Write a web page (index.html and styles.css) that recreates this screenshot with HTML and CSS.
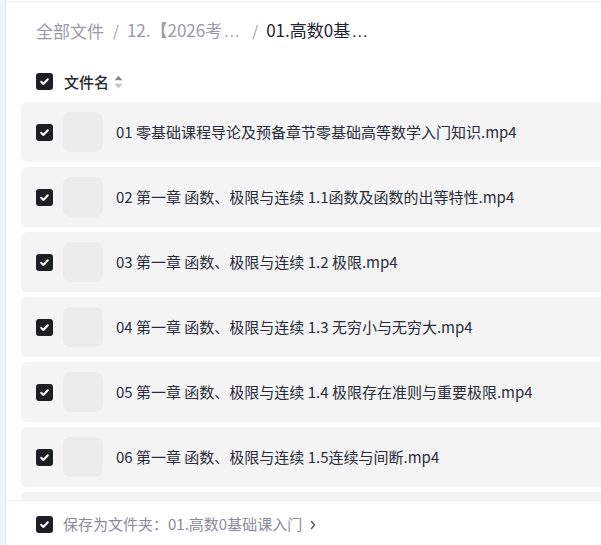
FILE: index.html
```html
<html lang="zh-CN">
<head>
  <meta charset="UTF-8">
  <meta name="viewport" content="width=device-width, initial-scale=1.0">
  <title>保存文件</title>
  <link rel="stylesheet" href="styles.css">
</head>
<body>
  <div class="side"></div>
  <div class="main">
    <div class="crumbs">
      <span class="crumb">全部文件</span>
      <span class="sep">/</span>
      <span class="crumb cut">12.【2026考<span class="dots">…</span></span>
      <span class="sep">/</span>
      <span class="crumb current">01.高数0基<span class="dots">…</span></span>
    </div>

    <div class="head">
      <span class="check"><svg viewBox="0 0 17 17"><polyline points="5.2,8.8 7.4,11 11.8,6.2" /></svg></span>
      <span class="head-name">文件名</span>
      <svg class="sort" viewBox="0 0 8 14"><polygon class="up" points="4,1.5 7.5,5.5 0.5,5.5" /><polygon class="down" points="0.5,8.5 7.5,8.5 4,12.5" /></svg>
    </div>

    <div class="list">
      <div class="row">
        <span class="check"><svg viewBox="0 0 17 17"><polyline points="5.2,8.8 7.4,11 11.8,6.2" /></svg></span>
        <span class="thumb"></span>
        <span class="name">01 零基础课程导论及预备章节零基础高等数学入门知识.mp4</span>
      </div>
      <div class="row">
        <span class="check"><svg viewBox="0 0 17 17"><polyline points="5.2,8.8 7.4,11 11.8,6.2" /></svg></span>
        <span class="thumb"></span>
        <span class="name">02 第一章 函数、极限与连续 1.1函数及函数的出等特性.mp4</span>
      </div>
      <div class="row">
        <span class="check"><svg viewBox="0 0 17 17"><polyline points="5.2,8.8 7.4,11 11.8,6.2" /></svg></span>
        <span class="thumb"></span>
        <span class="name">03 第一章 函数、极限与连续 1.2 极限.mp4</span>
      </div>
      <div class="row">
        <span class="check"><svg viewBox="0 0 17 17"><polyline points="5.2,8.8 7.4,11 11.8,6.2" /></svg></span>
        <span class="thumb"></span>
        <span class="name">04 第一章 函数、极限与连续 1.3 无穷小与无穷大.mp4</span>
      </div>
      <div class="row">
        <span class="check"><svg viewBox="0 0 17 17"><polyline points="5.2,8.8 7.4,11 11.8,6.2" /></svg></span>
        <span class="thumb"></span>
        <span class="name">05 第一章 函数、极限与连续 1.4 极限存在准则与重要极限.mp4</span>
      </div>
      <div class="row">
        <span class="check"><svg viewBox="0 0 17 17"><polyline points="5.2,8.8 7.4,11 11.8,6.2" /></svg></span>
        <span class="thumb"></span>
        <span class="name">06 第一章 函数、极限与连续 1.5连续与间断.mp4</span>
      </div>
      <div class="row"></div>
    </div>

    <div class="foot">
      <span class="check"><svg viewBox="0 0 17 17"><polyline points="5.2,8.8 7.4,11 11.8,6.2" /></svg></span>
      <span class="foot-text">保存为文件夹：01.高数0基础课入门</span>
      <svg class="arrow" viewBox="0 0 6 10"><polyline points="1.5,1.5 4.5,5 1.5,8.5" /></svg>
    </div>
  </div>
</body>
</html>
```

FILE: styles.css
```css
body {
  margin: 0;
  height: 545px;
  display: flex;
  overflow: hidden;
  font-family: "Noto Sans CJK SC", sans-serif;
  background-color: #fff;
}
.side {
  width: 5px;
  background-color: #f0f4fd;
  border-right: 1px solid #e0e4ec;
}
.main {
  flex: 1;
  display: flex;
  flex-direction: column;
  margin-top: 1px;
  border-top: 1px solid #eeeff2;
  overflow: hidden;
  min-width: 0;
}
.crumbs {
  display: flex;
  align-items: center;
  padding: 17px 0 18px 30px;
  height: 24px;
  font-size: 17px;
  line-height: 24px;
  color: #9a9aa6;
  white-space: nowrap;
}
.sep {
  margin: 0 8px 0 9px;
  font-size: 15px;
}
.cut {
  margin-right: 3px;
}
.dots {
  font-family: "Liberation Sans", sans-serif;
  margin-left: 1px;
}
.current {
  color: #1f2230;
}
.head {
  display: flex;
  align-items: center;
  height: 41px;
  padding-left: 30px;
}
.head-name {
  margin-left: 11px;
  font-size: 15px;
  font-weight: 500;
  color: #26282f;
}
.sort {
  width: 9px;
  height: 16px;
  margin-left: 5px;
}
.sort .up {
  fill: #85858b;
}
.sort .down {
  fill: #c2c2c6;
}
.check {
  flex: none;
  width: 17px;
  height: 17px;
  border-radius: 3px;
  background-color: #1e1f24;
  display: flex;
}
.check svg {
  width: 17px;
  height: 17px;
}
.check polyline {
  fill: none;
  stroke: #fff;
  stroke-width: 2;
  stroke-linecap: round;
  stroke-linejoin: round;
}
.list {
  flex: 1;
  padding-left: 15px;
  margin-right: -12px;
  overflow: hidden;
}
.row {
  display: flex;
  align-items: center;
  height: 60px;
  margin-bottom: 5px;
  padding-left: 15px;
  border-radius: 6px;
  background-color: #f4f4f4;
}
.thumb {
  flex: none;
  width: 40px;
  height: 40px;
  margin-left: 10px;
  border-radius: 8px;
  background-color: #ececec;
}
.name {
  margin-left: 13px;
  font-size: 15px;
  line-height: 20px;
  color: #2a2d39;
  white-space: nowrap;
}
.foot {
  flex: none;
  display: flex;
  align-items: center;
  height: 45px;
  padding: 2px 0 0 30px;
  box-sizing: border-box;
  border-top: 1px solid #eceef1;
}
.foot-text {
  margin-left: 10px;
  font-size: 15px;
  line-height: 22px;
  color: #8b8c99;
}
.arrow {
  width: 6px;
  height: 10px;
  margin-left: 8px;
  margin-top: 1px;
}
.arrow polyline {
  fill: none;
  stroke: #555866;
  stroke-width: 1.4;
  stroke-linecap: round;
  stroke-linejoin: round;
}
```
